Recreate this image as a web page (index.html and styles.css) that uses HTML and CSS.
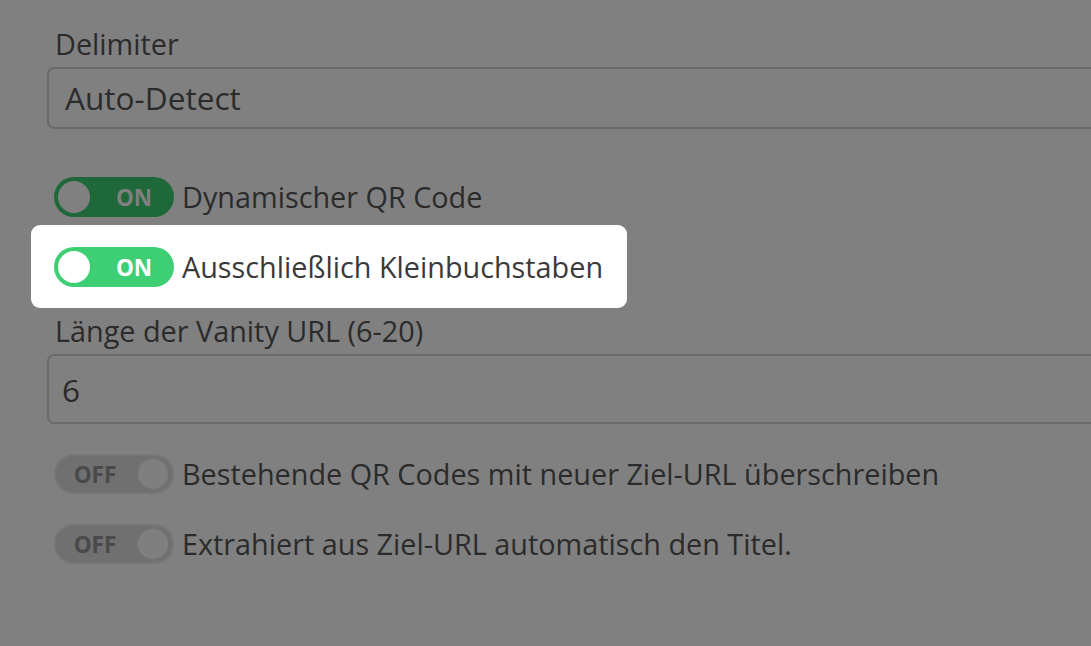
FILE: index.html
```html
<!DOCTYPE html>
<html lang="de">
<head>
<meta charset="utf-8">
<title>Einstellungen</title>
<link rel="stylesheet" href="styles.css">
</head>
<body>
<div class="page">
  <div class="field">
    <label class="label">Delimiter</label>
    <div class="input select">Auto-Detect</div>
  </div>

  <div class="toggle-row first">
    <span class="toggle on dim"><span class="knob"></span><span class="state">ON</span></span>
    <span class="toggle-label">Dynamischer QR Code</span>
  </div>

  <div class="highlight">
    <div class="toggle-row">
      <span class="toggle on"><span class="knob"></span><span class="state">ON</span></span>
      <span class="toggle-label">Ausschließlich Kleinbuchstaben</span>
    </div>
  </div>

  <div class="field second">
    <label class="label">Länge der Vanity URL (6-20)</label>
    <div class="input tall">6</div>
  </div>

  <div class="toggle-row off-row">
    <span class="toggle off"><span class="state">OFF</span><span class="knob"></span></span>
    <span class="toggle-label">Bestehende QR Codes mit neuer Ziel-URL überschreiben</span>
  </div>

  <div class="toggle-row off-row2">
    <span class="toggle off"><span class="state">OFF</span><span class="knob"></span></span>
    <span class="toggle-label">Extrahiert aus Ziel-URL automatisch den Titel.</span>
  </div>
</div>
</body>
</html>
```

FILE: styles.css
```css
html, body {
  margin: 0;
  padding: 0;
  background: #808080;
  font-family: "Open Sans", "Noto Sans", sans-serif;
  color: #2b2b2b;
  overflow: hidden;
}

.page {
  width: 1091px;
  height: 646px;
  padding: 26px 0 0 47px;
  box-sizing: border-box;
  display: flex;
  flex-direction: column;
}

.field {
  display: flex;
  flex-direction: column;
}

.label {
  font-size: 28.8px;
  line-height: 36px;
  padding-left: 8px;
  margin-bottom: 5px;
}

.input {
  height: 62px;
  box-sizing: border-box;
  border: 2px solid #6a6a6a;
  border-right: none;
  border-radius: 7px 0 0 7px;
  font-size: 31.6px;
  line-height: 58px;
  padding-left: 16px;
}

.input.tall {
  height: 70px;
  line-height: 67px;
  padding-left: 13px;
}

.toggle-row {
  display: flex;
  align-items: center;
  gap: 8px;
  padding-left: 7px;
}

.toggle-row.first {
  margin-top: 48px;
}

.toggle {
  width: 120px;
  height: 40px;
  border-radius: 20px;
  box-sizing: border-box;
  display: flex;
  align-items: center;
  padding: 0 4px;
  flex-shrink: 0;
}

.knob {
  width: 32px;
  height: 32px;
  border-radius: 50%;
  box-sizing: border-box;
}

.state {
  flex: 1;
  text-align: center;
  font-weight: 700;
  font-size: 22.5px;
  letter-spacing: 0;
}

.toggle.on {
  background: #3ecf74;
}
.toggle.on .knob {
  background: #ffffff;
}
.toggle.on .state {
  color: #ffffff;
  padding-left: 8px;
}

.toggle.on.dim {
  background: #1f683a;
}
.toggle.on.dim .knob {
  background: #808080;
}
.toggle.on.dim .state {
  color: #808080;
}

.toggle.off {
  background: #707070;
  border: 2px solid #767676;
  padding: 0 2px 0 2px;
}
.toggle.off .knob {
  background: #7f7f7f;
  border: 2px solid #727272;
  width: 34px;
  height: 34px;
}
.toggle.off .state {
  color: #4a4a4a;
  padding-right: 4px;
}

.toggle-label {
  font-size: 28.8px;
  line-height: 36px;
  white-space: nowrap;
}

.highlight {
  align-self: flex-start;
  margin: 8px 0 0 -16px;
  width: 596px;
  height: 83px;
  box-sizing: border-box;
  background: #ffffff;
  border-radius: 9px;
  padding: 22px 0 0 16px;
}

.highlight .toggle-label {
  color: #3a3a3a;
}

.field.second {
  margin-top: 5px;
}

.toggle-row.off-row {
  margin-top: 30px;
}

.toggle-row.off-row2 {
  margin-top: 30px;
}
```
